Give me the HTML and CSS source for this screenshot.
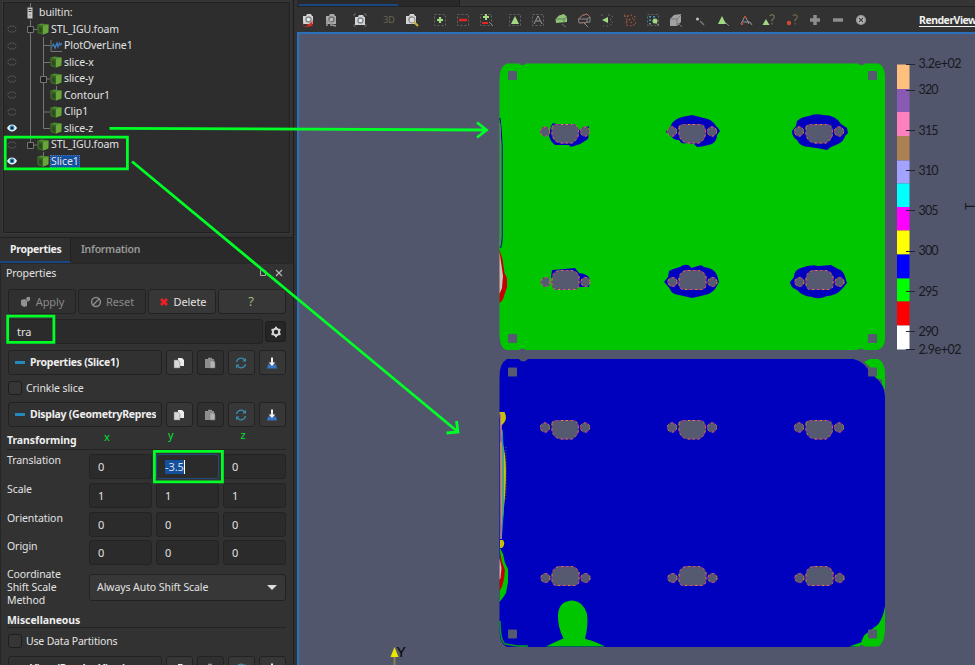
FILE: index.html
```html
<!DOCTYPE html>
<html lang="en">
<head>
<meta charset="utf-8">
<title>Pipeline and render view</title>
<link rel="stylesheet" href="styles.css">
</head>
<body>
<svg width="0" height="0" class="defs">
  <defs>
    <symbol id="cube" viewBox="0 0 12 12"><path d="M.5 1.8 4.5.5 11.5 1.6 11.3 9.6 6 11.6.8 10z" fill="#4f8a2e"/><path d="M.5 1.8 6 3 6 11.6.8 10z" fill="#3b6427"/><path d="M6 3 11.5 1.6 11.3 9.6 6 11.6z" fill="#68a63c"/><path d="M2 4.2 5 5v4.8L2 9z" fill="#2d4c1e"/></symbol>
    <symbol id="closed" viewBox="0 0 10 8"><path d="M1 3.5Q1.5 1 5 1t4 2.5M1 4.8Q1.5 7 5 7t4-2.2" fill="none" stroke="#626262" stroke-dasharray="2 .6"/></symbol>
    <symbol id="open" viewBox="0 0 10 8"><path d="M0 4Q2 .6 5 .6T10 4Q8 7.4 5 7.4T0 4z" fill="#f5fafc"/><circle cx="5" cy="3.8" r="2.5" fill="#2d8cc0"/><circle cx="5" cy="4" r="1.2" fill="#06263c"/></symbol>
    <symbol id="copy" viewBox="0 0 12 12"><path d="M5 1h4l2 2v6H5z" fill="#ededed"/><path d="M1 3h4l2 2v6H1z" fill="#d8d8d8" stroke="#777" stroke-width=".5"/></symbol>
    <symbol id="paste" viewBox="0 0 12 12"><path d="M2 2h2V.8h4V2h2v2h1v6H6v1H1V2z" fill="#8e8e8e"/><path d="M6 4h3l2 2v5H6z" fill="#b2b2b2" stroke="#777" stroke-width=".5"/></symbol>
    <symbol id="reload" viewBox="0 0 12 12"><path d="M1.5 5A4.6 4.6 0 0 1 9.7 3M10.5 7A4.6 4.6 0 0 1 2.3 9" fill="none" stroke="#3a8aab" stroke-width="1.4"/><path d="M11 .8v3.7H7.4zM1 11.2V7.5h3.6z" fill="#3a8aab"/></symbol>
    <symbol id="save" viewBox="0 0 12 12"><path d="M2 7.5h8l1 4H1z" fill="#3973c4"/><path d="M5 .5h2v5h2.4L6 9 2.6 5.500H5z" fill="#f1f1f1"/></symbol>
    <symbol id="cam" viewBox="0 0 16 16"><path d="M3 4h3l1-2h4l1 2h1v8H3z" fill="#d4d4d4"/><circle cx="8.500" cy="7.500" r="3.200" fill="#818589"/><circle cx="8.500" cy="7.500" r="1.800" fill="#e7eef2"/></symbol>
    <symbol id="frame" viewBox="0 0 16 16"><path d="M2.500 2.500h11v11h-11z" fill="none" stroke="#666" stroke-dasharray="2 2"/></symbol>
    <g id="bodyA"><path d="M552 127q1-2.500 4-2.500h17q4 0 5.500 5.500v4q-1 6-6.500 9h-11q-8-1-9-9v-4z"/><circle cx="545" cy="131.500" r="4.600"/><circle cx="585" cy="131.500" r="4.600"/></g>
    <g id="bodyB"><path d="M552 280q0-8 7-9.500h13q5 1 7 6v9q-1 4-5 4h-17q-4 0-5-4z"/><circle cx="545.500" cy="282" r="4.500"/><circle cx="585.500" cy="282" r="4.500"/></g>
    <g id="holeA"><use href="#bodyA" fill="#565a70" stroke="#6b3f78" stroke-width=".9"/><use href="#bodyA" fill="none" stroke="#d2a528" stroke-dasharray="2 3" stroke-width=".9"/><use href="#bodyA" fill="none" stroke="#c020c4" stroke-dasharray="2 6" stroke-dashoffset="3" stroke-width=".9"/></g>
    <g id="holeB"><use href="#bodyB" fill="#565a70" stroke="#6b3f78" stroke-width=".9"/><use href="#bodyB" fill="none" stroke="#d2a528" stroke-dasharray="2 3" stroke-width=".9"/><use href="#bodyB" fill="none" stroke="#c020c4" stroke-dasharray="2 6" stroke-dashoffset="3" stroke-width=".9"/></g>
    <g id="holes"><use href="#holeA"/><use href="#holeA" x="127"/><use href="#holeA" x="254"/><use href="#holeB"/><use href="#holeB" x="127"/><use href="#holeB" x="254"/></g>
  </defs>
</svg>
<div class="app">
  <aside class="side">
    <section class="browser">
      <svg class="branches" viewBox="0 0 290 232"><g fill="none" stroke="#757575"><path d="M30.500 3v4M30.500 20v125M30.500 29.500h7M43.500 37v91.500H50M43.500 45.500H50M43.500 62.500H50M43.500 79H50M43.500 112H50M56.500 86v4M30.500 145h7M43.500 152v4"/><g fill="#202020"><path d="M27.500 26.500h6v6h-6zM40.500 76.500h6v6h-6zM27.500 142.500h6v6h-6z"/></g></g></svg>
      <div class="row d0"><span class="eye"></span><svg class="server" viewBox="0 0 6 12"><path d="M.5.500h5v11h-5z" fill="#c8c8c8"/><path d="M1.500 2.500h3M1.500 4.500h3M2.500 8h1" stroke="#444"/></svg><span>builtin:</span></div>
      <div class="row d1"><svg class="eye"><use href="#closed"/></svg><svg class="ico"><use href="#cube"/></svg><span>STL_IGU.foam</span></div>
      <div class="row d2"><svg class="eye"><use href="#closed"/></svg><svg class="ico" viewBox="0 0 12 12"><path d="M1 0v11.500h11" fill="none" stroke="#777"/><path d="m1.500 7 2-3 1.500 4 2-5 1 4 1.500-4 1 2L12 3" fill="none" stroke="#3c80c2" stroke-width="1.200"/></svg><span>PlotOverLine1</span></div>
      <div class="row d2"><svg class="eye"><use href="#closed"/></svg><svg class="ico"><use href="#cube"/></svg><span>slice-x</span></div>
      <div class="row d2"><svg class="eye"><use href="#closed"/></svg><svg class="ico"><use href="#cube"/></svg><span>slice-y</span></div>
      <div class="row d2"><svg class="eye"><use href="#closed"/></svg><svg class="ico"><use href="#cube"/></svg><span>Contour1</span></div>
      <div class="row d2"><svg class="eye"><use href="#closed"/></svg><svg class="ico"><use href="#cube"/></svg><span>Clip1</span></div>
      <div class="row d2"><svg class="eye"><use href="#open"/></svg><svg class="ico"><use href="#cube"/></svg><span>slice-z</span></div>
      <div class="row d1"><svg class="eye"><use href="#closed"/></svg><svg class="ico"><use href="#cube"/></svg><span>STL_IGU.foam</span></div>
      <div class="row d1"><svg class="eye"><use href="#open"/></svg><svg class="ico"><use href="#cube"/></svg><span class="selected">Slice1</span></div>
    </section>
    <nav class="tabs"><span class="tab active">Properties</span><span class="tab">Information</span></nav>
    <section class="dock">
      <header class="dock-title"><span>Properties</span><svg viewBox="0 0 24 10"><path d="M1.500 2.500h5v5h-5z" fill="none" stroke="#aaa"/><path d="m17 2 6 6m0-6-6 6" stroke="#b8b8b8" stroke-width="1.200"/></svg></header>
      <div class="actions">
        <button class="btn off"><svg viewBox="0 0 12 12"><path d="M1 4l4-1 2 2v5l-3 1-3-2zM7 1h3v3L8 6 6 3z" fill="#929292"/></svg>Apply</button>
        <button class="btn off"><svg viewBox="0 0 12 12"><g fill="none" stroke="#8b8b8b" stroke-width="1.500"><circle cx="6" cy="6" r="4.400"/><path d="m3 9 6-6"/></g></svg>Reset</button>
        <button class="btn"><svg viewBox="0 0 12 12"><path d="m3 3 6 6m0-6L3 9" stroke="#ec2024" stroke-width="2.800"/></svg>Delete</button>
        <button class="btn help">?</button>
      </div>
      <div class="search"><div class="field query">tra</div><button class="gear"><svg viewBox="0 0 12 12"><circle cx="6" cy="6" r="3.200" fill="none" stroke="#d6d6d6" stroke-width="2"/><path d="M6 .8v1.700M6 9.500v1.700M1.500 3.400 3 4.200M9 7.800l1.500.8M1.500 8.600 3 7.800M9 4.200l1.500-.8" stroke="#d6d6d6" stroke-width="2"/></svg></button></div>
      <div class="group"><div class="btn heading"><i></i><span>Properties (Slice1)</span></div><button class="btn sq"><svg><use href="#copy"/></svg></button><button class="btn sq off"><svg><use href="#paste"/></svg></button><button class="btn sq"><svg><use href="#reload"/></svg></button><button class="btn sq"><svg><use href="#save"/></svg></button></div>
      <label class="check"><i></i>Crinkle slice</label>
      <div class="group"><div class="btn heading"><i></i><span>Display (GeometryRepres</span></div><button class="btn sq"><svg><use href="#copy"/></svg></button><button class="btn sq off"><svg><use href="#paste"/></svg></button><button class="btn sq"><svg><use href="#reload"/></svg></button><button class="btn sq"><svg><use href="#save"/></svg></button></div>
      <h3 class="caption first">Transforming</h3>
      <div class="form">
        <span>Translation</span><div class="field">0</div><div class="field focus"><mark>-3.5</mark></div><div class="field">0</div>
        <span>Scale</span><div class="field">1</div><div class="field">1</div><div class="field">1</div>
        <span>Orientation</span><div class="field">0</div><div class="field">0</div><div class="field">0</div>
        <span>Origin</span><div class="field">0</div><div class="field">0</div><div class="field">0</div>
      </div>
      <div class="method"><span>Coordinate<br>Shift Scale<br>Method</span><div class="btn combo">Always Auto Shift Scale<i></i></div></div>
      <h3 class="caption">Miscellaneous</h3>
      <label class="check last"><i></i>Use Data Partitions</label>
      <div class="group"><div class="btn heading"><i></i><span>View (Render View)</span></div><button class="btn sq"><svg><use href="#copy"/></svg></button><button class="btn sq off"><svg><use href="#paste"/></svg></button><button class="btn sq"><svg><use href="#reload"/></svg></button><button class="btn sq"><svg><use href="#save"/></svg></button></div>
    </section>
  </aside>
  <main class="main">
    <div class="layouts"><div class="layout-tab"></div></div>
    <div class="toolbar">
      <svg viewBox="0 0 16 16"><use href="#cam"/><path d="M3 9v5h5l-1.500-1.500Q11 12 12.500 8v6l-6 1-3-1z" fill="#d02d29"/></svg>
      <svg viewBox="0 0 16 16"><use href="#cam" opacity=".75"/><path d="M4 14V9l4 1v4m1-1 4 1" stroke="#999" stroke-width="1.500" fill="none"/></svg>
      <svg class="gap" viewBox="0 0 16 16"><use href="#cam" y="1"/><path d="M2 4V2h2m8 0h2v2m0 8v2h-2M4 14H2v-2" fill="none" stroke="#666"/></svg>
      <span class="gap three">3D</span>
      <svg viewBox="0 0 16 16"><use href="#cam"/><circle cx="9" cy="8" r="3" fill="#ddd" stroke="#888"/><path d="m11 10 4 4" stroke="#d1ae42" stroke-width="2"/></svg>
      <svg class="gap" viewBox="0 0 16 16"><use href="#frame"/><path d="M8 5v6M5 8h6" stroke="#a2d982" stroke-width="2.200"/></svg>
      <svg viewBox="0 0 16 16"><use href="#frame"/><path d="M4 8h8" stroke="#e62424" stroke-width="2.500"/></svg>
      <svg viewBox="0 0 16 16"><use href="#frame"/><path d="M8 2v6M5 5h6" stroke="#a2d982" stroke-width="2"/><path d="M4 11h6" stroke="#e62424" stroke-width="2"/><path d="m11 10 4 4" stroke="#888"/></svg>
      <svg class="gap" viewBox="0 0 16 16"><use href="#frame"/><path d="m8 4 4 8H4z" fill="#a2d982"/></svg>
      <svg viewBox="0 0 16 16"><use href="#frame"/><path d="m8 4 4 8M4 12l4-8M6 9h4" fill="none" stroke="#999"/></svg>
      <svg viewBox="0 0 16 16"><path d="M2.500 7 6 3.500 11 2l3 3v5l-11 1z" fill="#8fc675"/><path d="M3 7h8l3-2M11 7v3M9 12l4 3" stroke="#627b56" fill="none"/></svg>
      <svg viewBox="0 0 16 16"><path d="m2.500 7 3.500-3.500L11 2l3 3v5l-11 1zM3 7h8l3-2M11 7v3" fill="none" stroke="#888"/><path d="M3 7 6 3.500 11 2l3 3M5 11h5" fill="none" stroke="#b95b4d" stroke-dasharray="2 1"/><path d="m8 11 4 4" stroke="#888"/></svg>
      <svg viewBox="0 0 16 16"><path d="m3 8 6-3v6z" fill="#a2d982"/><path d="M2 3h3m4 0h2l3 2-3 3 3 3-4 3H4" fill="none" stroke="#666" stroke-dasharray="2 2"/></svg>
      <svg viewBox="0 0 16 16"><path d="m2 3 3 1 4-1 4 2-1 3 2 4-4 2-6-1 1-5zM5 4l6 9M4 10l7-4" fill="none" stroke="#a3503b" stroke-width="1.300" stroke-dasharray="1.500 2"/></svg>
      <svg viewBox="0 0 16 16"><use href="#frame"/><path d="M5 4v1.500m0 2v1.500m0 2v1.500M9 4v1.500" stroke="#4299be" stroke-width="2"/><circle cx="10" cy="9" r="2.500" fill="#a2d982"/><path d="m11 11 3 3" stroke="#888"/></svg>
      <svg viewBox="0 0 16 16"><path d="m2 7 4-4 7-1v8l-4 4H2z" fill="#a2a2a2"/><path d="M2 7h7l4-4M9 7v7M10 11l4 4" fill="none" stroke="#777"/></svg>
      <svg class="nudge" viewBox="0 0 16 16"><circle cx="5.500" cy="7" r="1.600" fill="#bbb"/><path d="m8 9 4 4" stroke="#777" stroke-width="1.500"/></svg>
      <svg viewBox="0 0 16 16"><path d="m7 4 4 8H3z" fill="#a2d982"/><path d="m10 10 4 4" stroke="#888"/></svg>
      <svg viewBox="0 0 16 16"><path d="m7 4 4 8M3 12l4-8M5 10h7l2 3" fill="none" stroke="#999"/><path d="M7 4v2M3 12h2" stroke="#c64d33" stroke-width="2"/></svg>
      <svg viewBox="0 0 16 16"><path d="m5 7 3.500 6h-7z" fill="#a2d982"/><path d="M9 4q1-2 3-1 3 2-1 5v1.500M11 11v1.500" fill="none" stroke="#75775b" stroke-width="1.200"/></svg>
      <svg viewBox="0 0 16 16"><circle cx="5" cy="11" r="2.200" fill="#d1492e"/><path d="M9 4q1-2 3-1 3 2-1 5v1.500M11 11v1.500" fill="none" stroke="#75664b" stroke-width="1.200"/></svg>
      <svg viewBox="0 0 16 16"><path d="M8 3v10M3 8h10" stroke="#8d8d8d" stroke-width="3.500"/></svg>
      <svg viewBox="0 0 16 16"><path d="M3 8h10" stroke="#8d8d8d" stroke-width="3.500"/></svg>
      <svg viewBox="0 0 16 16"><circle cx="8" cy="8" r="4.300" fill="#bbb" stroke="#999" stroke-width="1.600"/><path d="m6 6 4 4m0-4-4 4" stroke="#444" stroke-width="1.200"/></svg>
      <b class="view-name">RenderView</b>
    </div>
    <div class="viewport">
      <svg class="scene" viewBox="299 34 676 631" width="676" height="631">
        <path d="M507 63.500h12q3 3 7 0h332q4 3 7 0h13q6 1 7 12v264q-1 9-8 10.500h-13q-3-3-7 0H526q-4-3-7 0h-12q-7-1-7.500-15V79q0-13 7.500-15.500z" fill="#00c600"/>
        <g fill="#565a70"><rect x="508" y="71" width="9" height="9" rx="1"/><rect x="868" y="71" width="9" height="9" rx="1"/><rect x="508" y="334" width="9" height="9" rx="1"/><rect x="868" y="334" width="9" height="9" rx="1"/></g>
        <g fill="#0000bf">
          <path d="M551 126l2-3 3 1h18l5 6 10-4-1 8q2 5-3 7-5 4-11 5-4 2-5-1h-14q-5-4-6-9z"/>
          <path d="m666 131 4-3 2-5q5-5 10-6l10-2 12 3q8 1 12 8l2 2 2 3-3 4q0 6-5 9-10 3-15 3l-3-3-8-1q-4 2-7-3-7 0-8-5-5-2-5-4z"/>
          <path d="m792 131 4-5 1-5q4-4 12-5 6-3 14-1 13 0 18 9l6 4 1 5-3 3q-1 5-7 8-6 2-11 6-9-2-18-3-9 0-12-7-5-3-5-9z"/>
          <path d="m551 277 1-7 13-1 10-1 4 5q10 1 11 7l-1 7h-35z"/>
          <path d="m664 282 4-5 1-6q6-3 11-4 5-4 10-1l1 2 7-2q3-2 6 1 10 1 13 8l2 7-4 7q-4 5-10 6l-13 3-13-3q-8-1-9-6l-4-5z"/>
          <path d="m790 282 4-5q0-7 7-9 10-4 17-2l13-1 7 4q6 1 8 11l1 3-5 6q-6 7-15 7-8 4-15 1-10-1-15-7-7-3-7-8z"/>
        </g>
        <use href="#holes"/>
        <path d="m500 118 1 10 1.200 18v91q-.5 9-1.700 11" fill="none" stroke="#0000a8"/><path d="M500 123l.8 20v94l-1 8" fill="none" stroke="#777383"/>
        <path d="m499.500 250 3 9 2 14 2.500 5v9l-3 9q-1 5-4.500 7z" fill="#c60000"/><path d="m499.500 252 1.500 10 2 14-1 12-2.500 6z" fill="#c5c5c5"/>
        <path d="M507 359h12q4 5 9 0h325q9 2 14 9l9 10q8 6 9 18v222q-3 19-20 26-7 3-14 3H526q-4-3-7 0h-11q-8-1-8.500-18V377q0-14 7.500-18z" fill="#0000bf"/>
        <path d="m864 362 6-3h8q7 3 7 15v16l-3-6v-4l-6-2-6-11z" fill="#00c600"/>
        <path d="M885 606v20q0 17-7 20.500h-13q-3-3-6 0h-10l12-4 3-7 10-8q8-4 11-21.500z" fill="#00c600"/>
        <path d="M500 621q0 19 5 23l13 2h10" fill="none" stroke="#00a01a" stroke-width="1.500"/>
        <path d="m500 548 3 6 2 9 3 6v13l-2 11q-3 5-6.500 9z" fill="#00c600"/><path d="m500 552 2 10 3 8-1 9q-1 7-4.500 12z" fill="#c60000"/><path d="M499.500 558l2 10-1 10-1 2z" fill="#c5c5c5"/>
        <path d="M546 646.500q12-6 17.500-8-6-12-5.500-24 1-14 15-14 10 1 14 13 1.500 13-2 25l2 1q6 1 18 7z" fill="#00c600"/>
        <path d="M499.500 412h5q3 6 0 10l-4 5zM502 441q4 12 4 31t-3 45l-2 11-1-85zM500 540h3q3 4-1 8h-2z" fill="#c6bf08"/>
        <path d="M500.500 414v12l1.500 10" stroke="#c06bac" fill="none"/><path d="M502 430l1 21v62l-2 26" stroke="#27999c" fill="none" stroke-width="1.500"/><path d="M501 424v115" stroke="#bb8188" fill="none" stroke-width="1.500"/><path d="M505.700 447q1 25 0 52" stroke="#7b8030" stroke-dasharray="1 2" fill="none"/>
        <g fill="#565a70"><rect x="508" y="367.500" width="9" height="9" rx="1"/><rect x="868" y="367.500" width="9" height="9" rx="1"/><rect x="508" y="629.500" width="9" height="9" rx="1"/><rect x="868" y="629.500" width="9" height="9" rx="1"/></g>
        <use href="#holes" y="296"/>
        <g><path fill="#ffc07f" d="M897 64.500h12.500V89H897z"/><path fill="#895ab4" d="M897 89h12.500v23H897z"/><path fill="#ff80bf" d="M897 112h12.500v24H897z"/><path fill="#ad8053" d="M897 136h12.500v24.500H897z"/><path fill="#a2a2ff" d="M897 160.500h12.500v23H897z"/><path fill="#0ff" d="M897 183.500h12.500V207H897z"/><path fill="#f0f" d="M897 207h12.500v23.500H897z"/><path fill="#ff0" d="M897 230.500h12.500v24H897z"/><path fill="#00f" d="M897 254.500h12.500v24H897z"/><path fill="#0f0" d="M897 278.500h12.500v23H897z"/><path fill="red" d="M897 301.500h12.500v24H897z"/><path fill="#fff" d="M897 325.500h12.500v24H897z"/></g>
        <path d="M906 64.500h9M906 90.500h9M906 130.500h9M906 170.500h9M906 210.500h9M906 251.500h9M906 291.500h9M906 331.500h9M906 349.500h9" stroke="#242731"/>
        <g class="ticks"><text x="918.500" y="68" textLength="43">3.2e+02</text><text x="918.500" y="94" textLength="20">320</text><text x="918.500" y="134.500" textLength="20">315</text><text x="918.500" y="174.500" textLength="20">310</text><text x="918.500" y="215" textLength="20">305</text><text x="918.500" y="255" textLength="20">300</text><text x="918.500" y="295.500" textLength="20">295</text><text x="918.500" y="335.500" textLength="20">290</text><text x="918.500" y="353.500" textLength="43">2.9e+02</text><text transform="translate(974.500 210) rotate(-90)">T</text></g>
        <path d="M394.500 656v9" stroke="#888646" stroke-width="2"/><path d="m394.500 647 4 10h-8z" fill="#e9e900"/><text class="axis" x="396.500" y="657">Y</text>
      </svg>
    </div>
  </main>
  <svg class="notes" viewBox="0 0 975 665">
    <g fill="none" stroke="#00ff26" stroke-width="2.800"><path d="M5.200 137.200h122.200v31.600H5.200zM7.700 316.200h46.200v26.200H7.700zM154.400 451.400h68v30.400h-68zM109.500 128.300 486 130M477 122.500l9.500 7.500-9.500 7.500M132 161.500 457.500 431.500M456.500 421l1.500 11-11.500 1"/></g>
    <g class="letters"><text x="104" y="441">x</text><text x="168" y="439">y</text><text x="240.500" y="439">z</text></g>
  </svg>
</div>
</body>
</html>
```
FILE: styles.css
```css
* { box-sizing: border-box; }
body { margin: 0; overflow: hidden; background: #323232; color: #e2e2e2; font: 10.500px/13px "Noto Sans", sans-serif; letter-spacing: -.08px; }
.defs { position: absolute; }
.app { position: relative; display: flex; width: 975px; height: 665px; overflow: hidden; }
.side { display: flex; flex-direction: column; width: 294px; height: 665px; flex: none; border-right: 1px solid #1e1e1e; overflow: hidden; }
.browser { position: relative; flex: none; height: 231px; margin: 2px 3px 0; padding-top: 1.500px; background: #2d2d2d; border: 1px solid #202020; outline: 1px solid #393939; }
.branches { position: absolute; left: -4px; top: -3px; width: 290px; height: 232px; }
.row { position: relative; display: flex; align-items: center; height: 16.500px; }
.row .eye { width: 10px; height: 8px; margin-left: 3px; flex: none; }
.row .ico { width: 12px; height: 12px; flex: none; margin-right: 1px; }
.d1 .ico { margin-left: 20px; }
.d2 .ico { margin-left: 33px; }
.server { width: 6px; height: 12px; margin: 0 5px 0 10px; }
.d0 .server { margin-left: 10px; }
.row span:last-child { padding: 0 1px; }
.row .selected { background: #1450a0; outline: 1px dotted #5574a0; outline-offset: -1px; line-height: 13px; }
.tabs { display: flex; flex: none; height: 26px; margin-top: 4px; border-top: 1px solid #202020; background: #2a2a2a; letter-spacing: -.28px; }
.tab { padding: 5px 9px 0 10px; color: #999; font-weight: 600; }
.tab.active { width: 71px; color: #eee; font-weight: 700; border-right: 1px solid #222; border-bottom: 2px solid #194681; background: #303030; }
.dock { flex: 1; min-height: 0; padding: 0 7px 0 8px; border-left: 1px solid #262626; border-top: 1px solid #272727; overflow: hidden; }
.dock-title { display: flex; justify-content: space-between; height: 25px; margin-left: -3px; padding: 3px 3px 0 0; }
.dock-title svg { width: 24px; height: 10px; margin-top: 1px; }
button { margin: 0; padding: 0; font: inherit; letter-spacing: inherit; color: inherit; }
.btn { display: flex; align-items: center; justify-content: center; height: 25px; border: 1px solid #222; border-radius: 3px; background: #373737; }
.btn svg { width: 12px; height: 12px; }
.btn.off { background: #303030; color: #898989; }
.actions { display: grid; grid-template-columns: repeat(4, 1fr); gap: 2px; width: 278px; margin-left: -1px; }
.actions svg { margin-right: 4px; }
.actions .btn { font-size: 11px; }
.actions .help { padding-right: 2px; color: #a1b77c; font-size: 13px; }
.search { display: flex; align-items: center; gap: 2px; width: 278px; margin: 5px 0 6px -1px; }
.field { height: 25px; padding: 5px 8px 0; border: 1px solid #232323; border-radius: 3px; background: #2b2b2b; font-size: 11px; }
.query { width: 255px; }
.gear { display: flex; align-items: center; justify-content: center; width: 21px; height: 21px; border: 1px solid #1d1d1d; border-radius: 3px; background: #252525; }
.gear svg { width: 12px; height: 12px; }
.group { display: grid; grid-template-columns: 154px repeat(4, 27px); gap: 4px; width: 278px; margin-left: -1px; }
.group .sq { padding-right: 2px; }
.heading { justify-content: flex-start; padding: 0 4px 1px 6px; font-weight: 700; color: #eee; background: #313131; letter-spacing: -.26px; }
.heading span { overflow: hidden; white-space: nowrap; }
.heading i { width: 10px; height: 3px; margin-right: 5px; background: #2388bc; flex: none; }
.check { display: flex; align-items: center; height: 27px; margin-left: -1px; padding-bottom: 1px; }
.check i { width: 14px; height: 14px; margin-right: 4px; border: 1px solid #1e1e1e; border-radius: 3px; background: #363636; }
.caption { height: 16px; margin: 5px 0 0 -2px; padding-top: 2px; border-bottom: 1px solid #232323; font: 700 10.500px/13px "Noto Sans", sans-serif; color: #eee; }
.caption.first { height: 17px; margin: 6px 0 4px -2px; padding-top: 1px; }
.form { display: grid; grid-template-columns: 78px repeat(3, 63px); grid-auto-rows: 25px; column-gap: 4px; row-gap: 3.800px; margin-left: -2px; }
.focus { border-color: #214a80; }
mark { display: inline-block; color: #dedede; background: #1450a0; border-right: 1px solid #fff; line-height: 14px; }
.method { display: flex; align-items: center; height: 39px; margin: 3px 0 0 -2px; }
.method > span { width: 82px; }
.combo { width: 197px; height: 27px; justify-content: space-between; padding: 0 8px 1px 7px; }
.combo i { border: 5px solid transparent; border-top-color: #ddd; border-bottom: 0; }
.last { height: 26px; margin-bottom: 2px; padding: 0; letter-spacing: -.18px; }
.main { display: flex; flex-direction: column; flex: 1; padding-left: 3px; background: #323232; }
.layouts { height: 7px; padding: 5px 0 0 2px; background: linear-gradient(90deg, #292929 162px, #202020 162px, #202020 163px, #353535 163px); border-bottom: 1px solid #232323; }
.layout-tab { width: 99px; height: 2px; margin-top: -1px; background: #19477f; }
.toolbar { display: flex; align-items: center; gap: 5px; height: 25px; padding: 1px 0 0 2px; overflow: hidden; }
.toolbar svg, .three { width: 18px; height: 16px; flex: none; }
.toolbar .gap { margin-left: 6px; }
.toolbar .nudge { margin-left: 1px; }
.three { color: #6b6953; font-size: 9px; text-align: center; line-height: 16px; margin-right: -1px; }
.view-name { margin-left: 44px; color: #f0f0f0; text-decoration: underline; text-underline-offset: 2px; white-space: nowrap; letter-spacing: -.5px; }
.viewport { flex: 1; overflow: hidden; background: #52566c; border: 2px solid #2b70bd; border-width: 2px 0 0 2px; }
.scene { display: block; letter-spacing: 0; }
.ticks { fill: #17191f; font: 12.500px Lato, sans-serif; }
.axis { fill: #000; font: 14px "Liberation Sans", sans-serif; }
.notes { position: absolute; inset: 0; width: 975px; height: 665px; pointer-events: none; }
.letters { fill: #00e030; font: 11px "Noto Sans", sans-serif; }
```
